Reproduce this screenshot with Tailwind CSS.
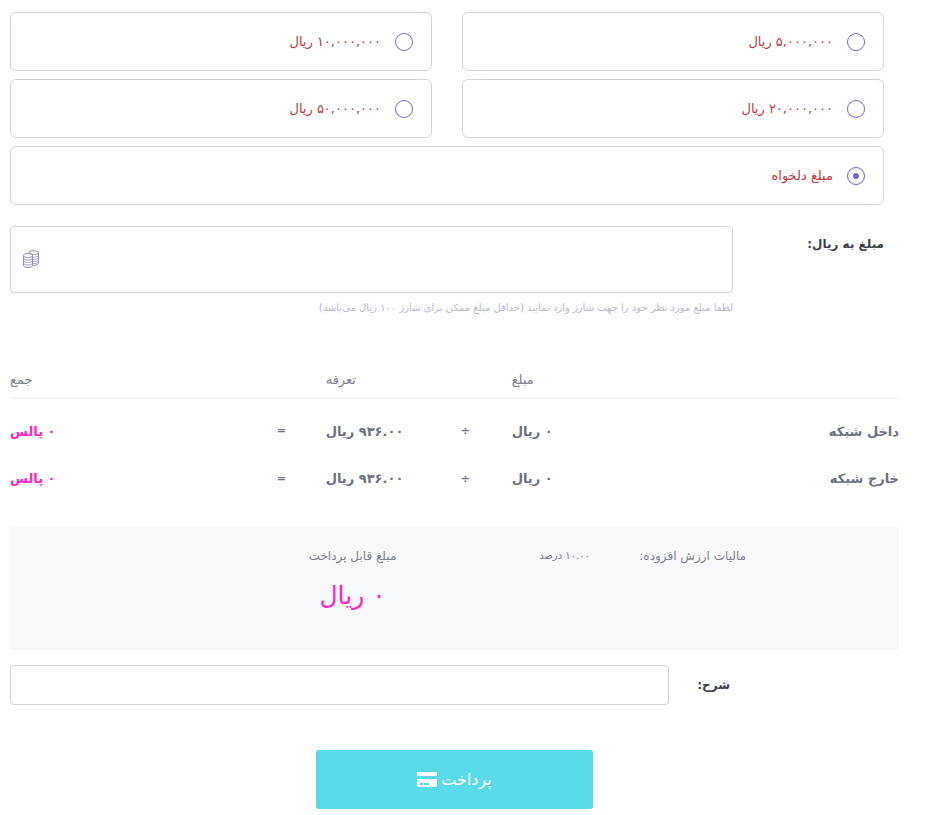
<!DOCTYPE html>
<html lang="fa" dir="rtl">
<head>
    <meta charset="UTF-8">
    <meta name="viewport" content="width=device-width, initial-scale=1.0">
    <title>شارژ حساب</title>
    <script src="https://cdn.jsdelivr.net/npm/@tailwindcss/browser@4"></script>
</head>
<body class="bg-white pt-3 pb-1 pl-[10px] pr-7 font-['DejaVu_Sans',sans-serif] text-[13px] text-[#6c7080]">
    <form>
        <div class="pr-[15px]">
            <!-- amount options -->
            <div class="grid grid-cols-2 gap-x-[30px] gap-y-2">
                <label class="flex h-[59px] items-center gap-[14px] rounded-md border border-[#d1d3dd] px-[18px] text-[#b83a42]">
                    <input type="radio" name="amount" value="5000000" class="size-[18px] appearance-none rounded-full border border-[#716aca] checked:bg-[#716aca] checked:bg-clip-content checked:p-[5px]">
                    <span>۵,۰۰۰,۰۰۰ ریال</span>
                </label>
                <label class="flex h-[59px] items-center gap-[14px] rounded-md border border-[#d1d3dd] px-[18px] text-[#b83a42]">
                    <input type="radio" name="amount" value="10000000" class="size-[18px] appearance-none rounded-full border border-[#716aca] checked:bg-[#716aca] checked:bg-clip-content checked:p-[5px]">
                    <span>۱۰,۰۰۰,۰۰۰ ریال</span>
                </label>
                <label class="flex h-[59px] items-center gap-[14px] rounded-md border border-[#d1d3dd] px-[18px] text-[#b83a42]">
                    <input type="radio" name="amount" value="20000000" class="size-[18px] appearance-none rounded-full border border-[#716aca] checked:bg-[#716aca] checked:bg-clip-content checked:p-[5px]">
                    <span>۲۰,۰۰۰,۰۰۰ ریال</span>
                </label>
                <label class="flex h-[59px] items-center gap-[14px] rounded-md border border-[#d1d3dd] px-[18px] text-[#b83a42]">
                    <input type="radio" name="amount" value="50000000" class="size-[18px] appearance-none rounded-full border border-[#716aca] checked:bg-[#716aca] checked:bg-clip-content checked:p-[5px]">
                    <span>۵۰,۰۰۰,۰۰۰ ریال</span>
                </label>
                <label class="col-span-2 flex h-[59px] items-center gap-[14px] rounded-md border border-[#d1d3dd] px-[18px] text-[#b83a42]">
                    <input type="radio" name="amount" value="custom" checked class="size-[18px] appearance-none rounded-full border border-[#716aca] checked:bg-[#716aca] checked:bg-clip-content checked:p-[5px]">
                    <span>مبلغ دلخواه</span>
                </label>
            </div>

            <!-- custom amount -->
            <div class="mt-[21px] flex">
                <label for="price" class="w-[151px] shrink-0 pt-2 text-xs leading-5 font-bold text-[#3f4047]">مبلغ به ریال:</label>
                <div class="grow">
                    <div class="relative">
                        <input id="price" type="text" class="block h-[67px] w-full rounded border border-[#ced4da] pr-4 pl-12 outline-none">
                        <svg class="absolute top-6 left-3 size-[18px]" viewBox="0 0 18 18" fill="none" stroke="#8f8bb8">
                            <path d="M1.500 5.500c0-1.300 2-2 4.500-2s4.500.7 4.500 2-2 2-4.500 2-4.500-.7-4.500-2zM1.500 5.500v10c0 1.300 2 2 4.500 2s4.500-.7 4.500-2v-10"/>
                            <path d="M1.500 8c0 1.300 2 2 4.500 2s4.500-.7 4.500-2M1.500 10.500c0 1.300 2 2 4.500 2s4.500-.7 4.500-2M1.500 13c0 1.300 2 2 4.500 2s4.500-.7 4.500-2" stroke-width="0.8"/>
                            <path d="M6.500 3.500V2.800c0-1.300 2.200-2 5-2s5 .7 5 2v10.400c0 1.300-2.200 2.300-6 2.300M6.500 3c.8 1.200 2.800 1.500 5 1.500s5-.6 5-1.700"/>
                            <path d="M10.500 7.200c3.500 0 6-.7 6-1.900M10.500 9.400c3.500 0 6-.7 6-1.900M10.500 11.600c3.500 0 6-.7 6-1.900M10.500 13.600c3.500 0 6-.7 6-1.900" stroke-width="0.8"/>
                        </svg>
                    </div>
                    <p class="mt-[7px] text-[10px] leading-4 text-[#b9b8d3]">لطفا مبلغ مورد نظر خود را جهت شارژ وارد نمایید (حداقل مبلغ ممکن برای شارژ ۱۰۰ ریال می‌باشد)</p>
                </div>
            </div>
        </div>

        <!-- tariff table -->
        <table class="mt-[46px] w-full table-fixed text-left">
            <colgroup>
                <col>
                <col class="w-[16%]">
                <col class="w-[51px]">
                <col class="w-[135px]">
                <col class="w-[49px]">
                <col class="w-[30%]">
            </colgroup>
            <thead class="text-[13px] text-[#7d808c]">
                <tr class="h-9 border-b-2 border-[#f4f4f9]">
                    <td></td>
                    <th class="text-left font-normal">مبلغ</th>
                    <td></td>
                    <th class="text-left font-normal">تعرفه</th>
                    <td></td>
                    <th class="text-left font-normal">جمع</th>
                </tr>
            </thead>
            <tbody class="font-bold">
                <tr>
                    <th class="h-[57px] pt-[9px] text-right">داخل شبکه</th>
                    <td class="pt-[9px]">۰ ریال</td>
                    <td class="pt-[9px] text-[11px]">÷</td>
                    <td class="pt-[9px]">۹۳۶.۰۰ ریال</td>
                    <td class="pt-[9px] text-[11px]">=</td>
                    <td class="pt-[9px] text-[#ff25c2]">۰ پالس</td>
                </tr>
                <tr>
                    <th class="h-12 text-right">خارج شبکه</th>
                    <td>۰ ریال</td>
                    <td class="text-[11px]">÷</td>
                    <td>۹۳۶.۰۰ ریال</td>
                    <td class="text-[11px]">=</td>
                    <td class="text-[#ff25c2]">۰ پالس</td>
                </tr>
            </tbody>
        </table>

        <!-- totals -->
        <div class="mt-6 flex h-[123px] bg-[#f7f8fa] pt-[17px] pr-[153px] text-xs text-[#7d808c]">
            <span class="w-[156px] leading-6">مالیات ارزش افزوده:</span>
            <span class="w-[146px] text-[10px] leading-6">۱۰.۰۰ درصد</span>
            <div class="w-[183px] text-center">
                <p class="leading-6">مبلغ قابل پرداخت</p>
                <p class="mt-2 text-[25px] leading-10 text-[#ff25c2]">۰ ریال</p>
            </div>
        </div>

        <div class="mt-[15px] flex items-center pr-[169px]">
            <label for="description" class="w-[61px] shrink-0 text-xs font-bold text-[#3f4047]">شرح:</label>
            <input id="description" type="text" class="h-10 w-full rounded border border-[#ced4da] px-4 outline-none">
        </div>

        <button type="button" class="mx-auto mt-[45px] flex h-[59px] w-[277px] items-center justify-center gap-1 rounded-[3px] bg-[#5ad9e8] text-base text-white">
            <span>پرداخت</span>
            <svg class="h-[15px] w-5" viewBox="0 0 20 15" fill="#fff">
                <path d="M1.500 0h17A1.500 1.500 0 0 1 20 1.500V4H0V1.500A1.500 1.500 0 0 1 1.500 0z"/>
                <path fill-rule="evenodd" d="M0 7h20v6.500a1.500 1.500 0 0 1-1.500 1.500h-17A1.500 1.500 0 0 1 0 13.500zM3 11v2h3v-2zM7 11v2h5v-2z"/>
            </svg>
        </button>
    </form>
</body>
</html>
